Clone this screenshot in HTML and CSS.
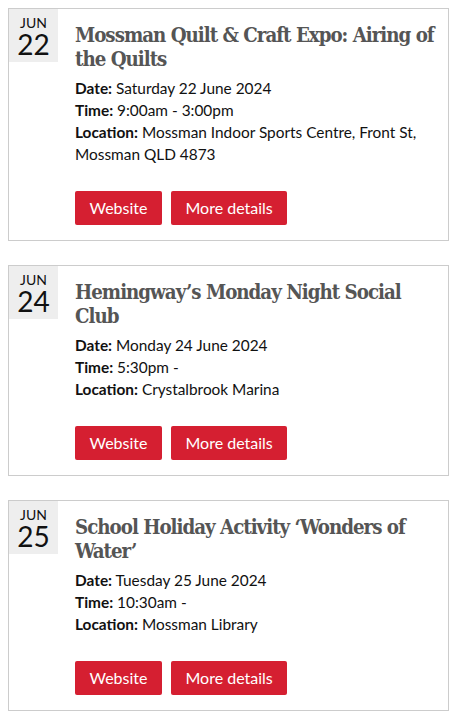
FILE: index.html
```html
<!DOCTYPE html>
<html lang="en">
<head>
<meta charset="utf-8">
<title>Events</title>
<link rel="stylesheet" href="styles.css">
</head>
<body>
<div class="list">
  <article class="card">
    <div class="date"><span class="mon">JUN</span><span class="day">22</span></div>
    <div class="body">
      <h2 class="title">Mossman Quilt &amp; Craft Expo: Airing of the Quilts</h2>
      <p class="meta"><b>Date:</b> Saturday 22 June 2024</p>
      <p class="meta"><b>Time:</b> 9:00am - 3:00pm</p>
      <p class="meta"><b>Location:</b> Mossman Indoor Sports Centre, Front St, Mossman QLD 4873</p>
      <div class="actions"><a class="btn" href="#">Website</a><a class="btn" href="#">More details</a></div>
    </div>
  </article>
  <article class="card">
    <div class="date"><span class="mon">JUN</span><span class="day">24</span></div>
    <div class="body">
      <h2 class="title">Hemingway’s Monday Night Social Club</h2>
      <p class="meta"><b>Date:</b> Monday 24 June 2024</p>
      <p class="meta"><b>Time:</b> 5:30pm -</p>
      <p class="meta"><b>Location:</b> Crystalbrook Marina</p>
      <div class="actions"><a class="btn" href="#">Website</a><a class="btn" href="#">More details</a></div>
    </div>
  </article>
  <article class="card">
    <div class="date"><span class="mon">JUN</span><span class="day">25</span></div>
    <div class="body">
      <h2 class="title">School Holiday Activity ‘Wonders of Water’</h2>
      <p class="meta"><b>Date:</b> Tuesday 25 June 2024</p>
      <p class="meta"><b>Time:</b> 10:30am -</p>
      <p class="meta"><b>Location:</b> Mossman Library</p>
      <div class="actions"><a class="btn" href="#">Website</a><a class="btn" href="#">More details</a></div>
    </div>
  </article>
</div>
</body>
</html>
```
FILE: styles.css
```css
html, body { background: #fff; }
body {
  margin: 8px;
  font-family: Lato, "Liberation Sans", sans-serif;
  color: #111;
}
.list { display: flex; flex-direction: column; gap: 24px; }
.card {
  display: flex;
  align-items: flex-start;
  border: 1px solid #cccccc;
}
.date {
  flex: 0 0 49px;
  height: 53px;
  background: #eeeeee;
  display: flex;
  flex-direction: column;
  align-items: center;
  color: #111;
}
.mon { font-size: 14px; line-height: 16px; margin-top: 6px; }
.day { font-size: 28px; line-height: 26px; }
.body { flex: 1; padding: 14px 8px 15px 17px; }
.title {
  margin: 0 0 6px;
  font-family: "DejaVu Serif", serif;
  font-stretch: condensed;
  font-weight: bold;
  font-size: 20.3px;
  letter-spacing: -1px;
  line-height: 24px;
  color: #555555;
}
.meta { margin: 0; font-size: 15.4px; line-height: 22px; }
.meta b { font-weight: bold; }
.actions { display: flex; gap: 9px; margin-top: 26px; }
.btn {
  display: block;
  background: #d51f31;
  color: #fff;
  text-decoration: none;
  font-size: 16px;
  line-height: 34px;
  height: 34px;
  padding: 0 14.5px;
  border-radius: 2px;
}
```
